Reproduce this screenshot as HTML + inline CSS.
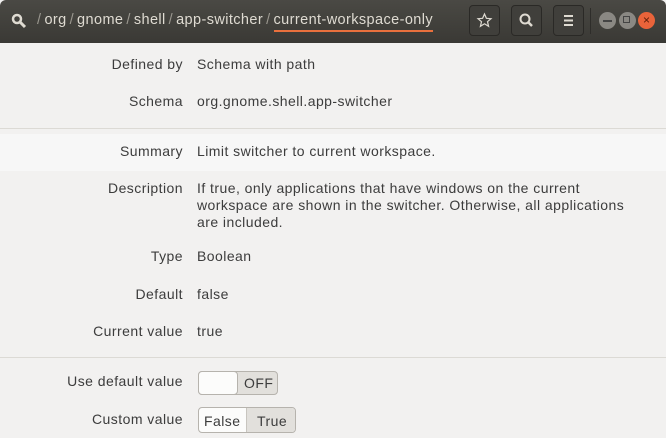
<!DOCTYPE html>
<html><head><style>
body{margin:0;width:666px;height:438px;overflow:hidden;background:#f2f1f0;font-family:"Liberation Sans",sans-serif;font-size:14px;color:#3c3c3c;position:relative;letter-spacing:0.45px}
.hb{position:absolute;left:0;top:0;width:666px;height:43px;background:linear-gradient(#4a4944,#3a3935);border-radius:6px 6px 0 0}
.crumb{position:absolute;top:12px;left:34px;color:#dfdbd2;font-size:14.5px;white-space:nowrap;letter-spacing:0.4px}
.crumb .s{color:#9a978f;margin:0 3px}
.cur{border-bottom:2px solid #e9703d;padding-bottom:2px}
.btn{position:absolute;top:5px;width:31px;height:31px;border:1px solid #2a2926;border-radius:4px;background:#403f3b;box-sizing:border-box}
.wc{position:absolute;top:12px;width:17px;height:17px;border-radius:50%;background:#8a8883}
.l{position:absolute;right:483px;text-align:right;white-space:nowrap}
.v{position:absolute;left:197px;white-space:nowrap}
.sep{position:absolute;left:0;width:666px;height:1px;background:#dcdad5}
</style></head><body>
<div class="hb"></div>
<svg style="position:absolute;left:11px;top:13px" width="16" height="16" viewBox="0 0 16 16"><circle cx="6" cy="6" r="4" fill="none" stroke="#dfdbd2" stroke-width="2.5"/><path d="M9 9l5 5" stroke="#dfdbd2" stroke-width="3"/></svg>
<div class="crumb"><span class="s">/</span>org<span class="s">/</span>gnome<span class="s">/</span>shell<span class="s">/</span>app-switcher<span class="s">/</span><span class="cur">current-workspace-only</span></div>
<div class="btn" style="left:469px"><svg width="29" height="29" viewBox="0 0 29 29"><path d="M14.5 8l1.9 4.3 4.6.4-3.5 3 1.1 4.6-4.1-2.5-4.1 2.5 1.1-4.6-3.5-3 4.6-.4z" fill="none" stroke="#dfdbd2" stroke-width="1.2"/></svg></div>
<div class="btn" style="left:511px"><svg width="29" height="29" viewBox="0 0 29 29"><circle cx="13" cy="13" r="4.5" fill="none" stroke="#dfdbd2" stroke-width="2"/><path d="M16 16l4 4" stroke="#dfdbd2" stroke-width="2.5"/></svg></div>
<div class="btn" style="left:553px"><svg width="29" height="29" viewBox="0 0 29 29"><path d="M10 10h9M10 14.5h9M10 19h9" stroke="#dfdbd2" stroke-width="2"/></svg></div>
<div style="position:absolute;left:590px;top:8px;width:1px;height:26px;background:#2e2d2a"></div>
<div class="wc" style="left:599px"></div><div class="wc" style="left:619px"></div>
<div class="wc" style="left:638px;background:#e9633a"></div>
<div style="position:absolute;left:603px;top:20px;width:9px;height:1.5px;background:#444"></div>
<div style="position:absolute;left:623px;top:16px;width:7px;height:7px;border:1.5px solid #444;box-sizing:border-box"></div>
<div style="position:absolute;left:638px;top:12px;width:17px;height:17px;color:#5a1b07;font-size:12px;text-align:center;line-height:17px;letter-spacing:0">×</div>

<div class="l" style="top:56px">Defined by</div><div class="v" style="top:56px">Schema with path</div>
<div class="l" style="top:93px">Schema</div><div class="v" style="top:93px">org.gnome.shell.app-switcher</div>
<div class="sep" style="top:128px"></div>
<div style="position:absolute;left:0;top:134px;width:666px;height:37px;background:#f7f7f7"></div>
<div class="l" style="top:143px">Summary</div><div class="v" style="top:143px">Limit switcher to current workspace.</div>
<div class="l" style="top:180px">Description</div><div class="v" style="top:180px;line-height:17px">If true, only applications that have windows on the current<br>workspace are shown in the switcher. Otherwise, all applications<br>are included.</div>
<div class="l" style="top:248px">Type</div><div class="v" style="top:248px">Boolean</div>
<div class="l" style="top:286px">Default</div><div class="v" style="top:286px">false</div>
<div class="l" style="top:323px">Current value</div><div class="v" style="top:323px">true</div>
<div class="sep" style="top:357px"></div>
<div class="l" style="top:373px">Use default value</div>
<div style="position:absolute;left:198px;top:371px;width:80px;height:24px;border:1px solid #b6b3ad;border-radius:4px;background:#e2e0dc;box-sizing:border-box"><div style="position:absolute;left:-1px;top:-1px;width:40px;height:24px;border:1px solid #b6b3ad;border-radius:4px;background:#fcfcfb;box-sizing:border-box"></div><span style="position:absolute;left:45px;top:3px">OFF</span></div>
<div class="l" style="top:411px">Custom value</div>
<div style="position:absolute;left:198px;top:407px;width:98px;height:26px;border:1px solid #b6b3ad;border-radius:4px;background:#fcfcfb;box-sizing:border-box;overflow:hidden"><span style="position:absolute;left:5px;top:5px">False</span><div style="position:absolute;left:47px;top:0;width:51px;height:26px;background:#e2e0dc;border-left:1px solid #c8c5bf"></div><span style="position:absolute;left:58px;top:5px">True</span></div>
</body></html>
